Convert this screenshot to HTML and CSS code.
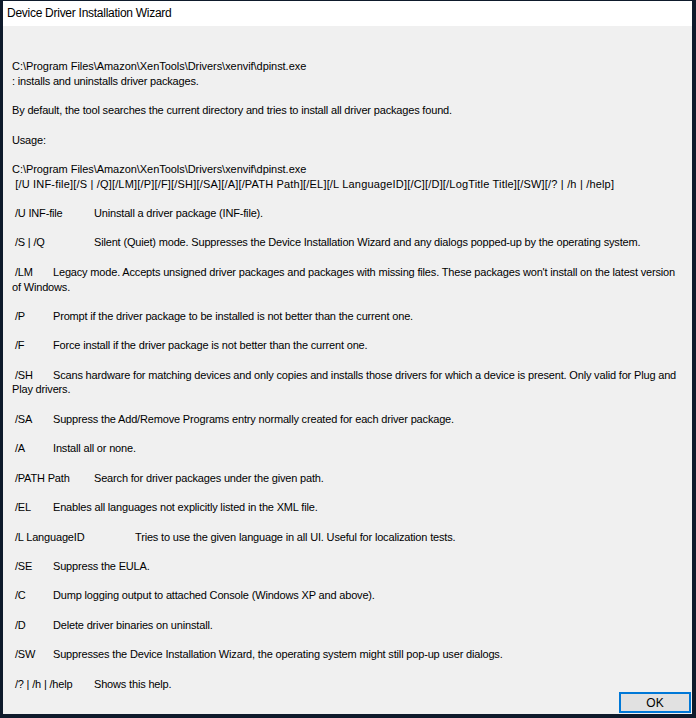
FILE: index.html
```html
<!DOCTYPE html>
<html lang="en">
<head>
<meta charset="utf-8">
<title>Device Driver Installation Wizard</title>
<link rel="stylesheet" href="styles.css">
</head>
<body>
<div class="window">
  <div class="titlebar">Device Driver Installation Wizard</div>
  <div class="content"><pre class="help"><span class="path">C:\Program Files\Amazon\XenTools\Drivers\xenvif\dpinst.exe</span>
: installs and uninstalls driver packages.

By default, the tool searches the current directory and tries to install all driver packages found.

Usage:

<span class="path">C:\Program Files\Amazon\XenTools\Drivers\xenvif\dpinst.exe</span>
<span class="syntax"> [/U INF-file][/S | /Q][/LM][/P][/F][/SH][/SA][/A][/PATH Path][/EL][/L LanguageID][/C][/D][/LogTitle Title][/SW][/? | /h | /help]</span>

 /U INF-file&#9;Uninstall a driver package (INF-file).

 /S | /Q&#9;&#9;Silent (Quiet) mode. Suppresses the Device Installation Wizard and any dialogs popped-up by the operating system.

 /LM&#9;Legacy mode. Accepts unsigned driver packages and packages with missing files. These packages won't install on the latest version
of Windows.

 /P&#9;Prompt if the driver package to be installed is not better than the current one.

 /F&#9;Force install if the driver package is not better than the current one.

 /SH&#9;Scans hardware for matching devices and only copies and installs those drivers for which a device is present. Only valid for Plug and
Play drivers.

 /SA&#9;Suppress the Add/Remove Programs entry normally created for each driver package.

 /A&#9;Install all or none.

 /PATH Path&#9;Search for driver packages under the given path.

 /EL&#9;Enables all languages not explicitly listed in the XML file.

 /L LanguageID&#9;&#9;Tries to use the given language in all UI. Useful for localization tests.

 /SE&#9;Suppress the EULA.

 /C&#9;Dump logging output to attached Console (Windows XP and above).

 /D&#9;Delete driver binaries on uninstall.

 /SW&#9;Suppresses the Device Installation Wizard, the operating system might still pop-up user dialogs.

 /? | /h | /help&#9;Shows this help.</pre></div>
  <div class="footer"><button class="ok-button" type="button">OK</button></div>
</div>
</body>
</html>
```
FILE: styles.css
```css
html, body {
  margin: 0;
  height: 100%;
}

body {
  box-sizing: border-box;
  padding: 1px 4px 4px 3px;
  background: #0e1a2b;
  font-family: "Liberation Sans", Arial, sans-serif;
  color: #000;
}

.window {
  height: 100%;
  display: flex;
  flex-direction: column;
  background: #f0f0f0;
}

.titlebar {
  height: 25px;
  flex: none;
  background: #fff;
  font-size: 12px;
  letter-spacing: -0.27px;
  line-height: 25px;
  padding-left: 4px;
  white-space: nowrap;
}

.content {
  flex: 1;
  padding: 33px 0 0 9px;
  overflow: hidden;
}

.help {
  margin: 0;
  font-family: "Liberation Sans", Arial, sans-serif;
  font-size: 11px;
  letter-spacing: -0.17px;
  line-height: 14.7px;
  white-space: pre;
  tab-size: 41px;
  -moz-tab-size: 41px;
}

.help .path {
  letter-spacing: -0.05px;
}

.help .syntax {
  letter-spacing: 0.18px;
}

.footer {
  flex: none;
  display: flex;
  justify-content: flex-end;
  padding: 0 1px 1px 0;
}

.ok-button {
  width: 72px;
  height: 21px;
  box-sizing: border-box;
  border: 2px solid #0078d7;
  background: #e1e1e1;
  font-family: "Liberation Sans", Arial, sans-serif;
  font-size: 12px;
  color: #000;
  padding: 0;
  margin: 0;
}
```
